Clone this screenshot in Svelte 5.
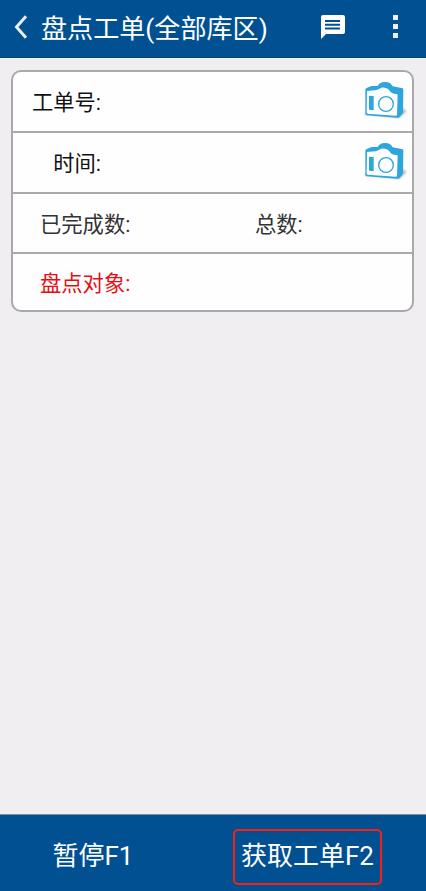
<script lang="ts">
  type ScanField = {
    id: string;
    label: string;
    value: string;
  };

  let fields: ScanField[] = $state([
    { id: 'order', label: '工单号:', value: '' },
    { id: 'time', label: '时间:', value: '' }
  ]);
  let finished = $state('');
  let total = $state('');
  let target = $state('');
</script>

{#snippet camera()}
  <svg width="46" height="40" viewBox="36 60 138 120" aria-hidden="true">
    <defs>
      <filter id="soft" x="-30%" y="-30%" width="160%" height="160%">
        <feGaussianBlur stdDeviation="3" />
      </filter>
    </defs>
    <path d="M42 160 L148 171 L170 150 L156 140 L60 150Z" fill="#77777f" opacity="0.5" filter="url(#soft)" />
    <path
      d="M46 86 Q46 83 50 81 L65 75 L83 75 Q88 64 104 63 Q121 62 128 76 L158 82 Q160 83 160 87 L159 156 L148 169 Q146 171 142 170 L50 163 Q46 162 46 158Z"
      fill="#2ca6dd"
    />
    <path
      d="M51 90 L76 88 Q83 87 87 84 Q95 79 104 80 Q116 82 121 92 Q125 97 132 98 L140 99 Q143 99 143 103 L141 161 Q141 164 137 164 L53 158 Q50 158 50 154Z"
      fill="#fff"
    />
    <path d="M57 104 L71 105 L71 148 L57 146Z" fill="#2ca6dd" />
    <circle cx="108" cy="129" r="22" fill="none" stroke="#2ca6dd" stroke-width="4" />
  </svg>
{/snippet}

<div class="screen">
  <header class="topbar">
    <button class="icon-button back" aria-label="返回">
      <svg width="14" height="26" viewBox="0 0 14 26">
        <path d="M12 2.2 L2.5 13 L12 23.8" fill="none" stroke="#e9edf5" stroke-width="3" />
      </svg>
    </button>
    <h1>盘点工单(全部库区)</h1>
    <button class="icon-button message" aria-label="消息">
      <svg width="26" height="26" viewBox="0 0 26 26">
        <path d="M3 1 H23 Q25 1 25 3 V18 Q25 20 23 20 H6 L1 25 V3 Q1 1 3 1Z" fill="#fff" />
        <path d="M5 7 H20 M5 10.8 H20 M5 14.6 H20" stroke="#005092" stroke-width="2" />
      </svg>
    </button>
    <button class="icon-button more" aria-label="更多">
      <span></span>
      <span></span>
      <span></span>
    </button>
  </header>

  <main>
    <section class="card">
      {#each fields as field (field.id)}
        <div class="row scan">
          <span class="label">{field.label}</span>
          <span class="value">{field.value}</span>
          <button class="icon-button" aria-label="扫描">{@render camera()}</button>
        </div>
      {/each}
      <div class="row counts">
        <span>已完成数:{finished}</span>
        <span>总数:{total}</span>
      </div>
      <div class="row target">
        <span>盘点对象:{target}</span>
      </div>
    </section>
  </main>

  <footer>
    <button class="action">暂停F1</button>
    <button class="action"><span class="marked">获取工单F2</span></button>
  </footer>
</div>

<style>
  :global(body) {
    margin: 0;
    background: #f0eef1;
  }

  .screen {
    height: 100vh;
    display: flex;
    flex-direction: column;
    font-family: Roboto, 'Noto Sans CJK SC', sans-serif;
    background: #f0eef1;
  }

  button {
    border: 0;
    padding: 0;
    background: none;
    color: inherit;
    font: inherit;
    cursor: pointer;
  }

  .icon-button {
    display: flex;
    flex: none;
  }

  .topbar {
    box-sizing: border-box;
    height: 58px;
    flex: none;
    display: flex;
    align-items: center;
    padding: 0 28px 4px 14px;
    border-bottom: 1px solid #064479;
    background: #005092;
    color: #fff;
  }

  h1 {
    flex: 1;
    margin: 5px 0 0 13px;
    font-size: 26.1px;
    line-height: 36px;
    font-weight: 400;
    white-space: nowrap;
  }

  .message {
    margin-right: 47px;
  }

  .more {
    width: 5px;
    flex-direction: column;
    gap: 4px;
  }

  .more span {
    width: 5px;
    height: 5px;
    background: #edf0f6;
  }

  main {
    flex: 1;
    padding: 12px 12px 0 11px;
  }

  .card {
    border: 2px solid #a9a9ab;
    border-radius: 10px;
    overflow: hidden;
    background: #fefefe;
    font-size: 21.3px;
    line-height: 30px;
  }

  .row {
    box-sizing: border-box;
    height: 60px;
    display: flex;
    align-items: center;
    padding-top: 4px;
    border-bottom: 2px solid #a9a9ab;
    color: #333;
  }

  .scan {
    height: 61px;
    padding: 0 4px 1px 0;
    color: #111;
  }

  .scan span {
    padding-top: 3px;
  }

  .label {
    width: 88px;
    text-align: right;
  }

  .value {
    flex: 1;
  }

  .counts span {
    flex: 1;
    padding-left: 27px;
  }

  .counts span + span {
    padding-left: 58px;
  }

  .target {
    height: 56px;
    padding-left: 27px;
    border-bottom: 0;
    color: #e60d13;
  }

  footer {
    box-sizing: border-box;
    height: 77px;
    flex: none;
    display: flex;
    border-top: 1px solid #858d96;
    background: #005092;
    color: #fff;
    font-size: 26px;
    line-height: 36px;
  }

  .action {
    flex: 0 0 205px;
    box-sizing: border-box;
    display: flex;
    align-items: center;
    justify-content: center;
    padding: 5px 19px 0 0;
  }

  .action + .action {
    padding: 8px 0 0 0;
  }

  .marked {
    padding: 7px 6px 9px;
    border: 2px solid #fa1e14;
    border-radius: 5px;
  }
</style>
